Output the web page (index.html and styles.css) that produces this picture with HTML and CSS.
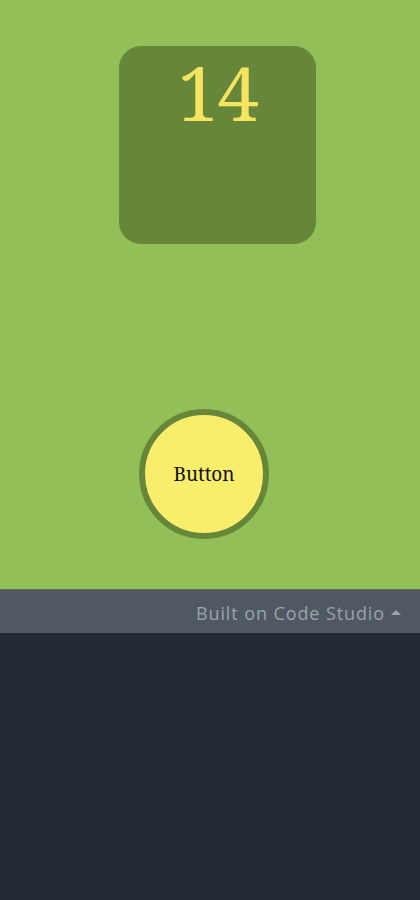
FILE: index.html
```html
<!DOCTYPE html>
<html lang="en">
<head>
<meta charset="UTF-8">
<meta name="viewport" content="width=device-width, initial-scale=1.0">
<title>Counter</title>
<link rel="stylesheet" href="styles.css">
</head>
<body>

<div class="app">
<div class="counter">
<span id="count">14</span>
</div>
<button class="tap" id="tap">Button</button>
</div>

<div class="footer">
<span>Built on Code Studio</span>
<span class="arrow"></span>
</div>

<div class="rest"></div>

</body>
</html>
```

FILE: styles.css
```css
body {
margin: 0;
background-color: #212a35;
font-family: "DejaVu Serif", "Liberation Serif", serif;
}
.app {
height: 589px;
background-color: #93bf58;
display: flex;
flex-direction: column;
align-items: center;
}
.counter {
width: 197px;
height: 198px;
margin-top: 46px;
margin-left: 15px;
background-color: #66873a;
border-radius: 22px;
text-align: center;
}
.counter span {
display: block;
color: #f6e35f;
font-family: "Noto Serif", "DejaVu Serif", serif;
font-size: 74px;
line-height: 94px;
letter-spacing: -1px;
}
.tap {
width: 130px;
height: 130px;
margin-top: 165px;
margin-left: -12px;
border: 6px solid #66873a;
border-radius: 50%;
background-color: #f8ee6b;
color: #111;
font-family: "Noto Serif", "DejaVu Serif", serif;
font-size: 19px;
padding: 0;
}
.footer {
height: 44px;
background-color: #4f5863;
border-top: 1px solid #5d6b48;
display: flex;
justify-content: flex-end;
align-items: center;
padding-right: 19px;
padding-top: 3px;
color: #9ca3aa;
font-family: "Open Sans", sans-serif;
font-size: 18px;
letter-spacing: 0.9px;
box-sizing: border-box;
gap: 6px;
}
.footer .arrow {
width: 0;
height: 0;
border-left: 5px solid transparent;
border-right: 5px solid transparent;
border-bottom: 5px solid #9ca3aa;
margin-bottom: 2px;
}
```
